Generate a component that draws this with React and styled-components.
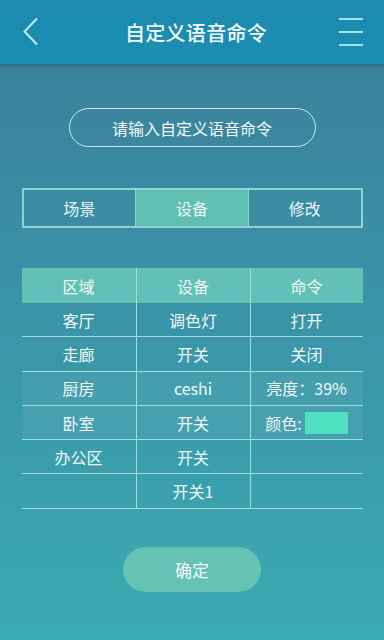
import styled, { createGlobalStyle } from 'styled-components';

const GlobalStyle = createGlobalStyle`
    html, body {
        margin: 0;
        padding: 0;
    }
    body {
        font-family: "Noto Sans CJK SC", "Noto Sans", sans-serif;
        background: #3a93a6;
    }
    * {
        box-sizing: border-box;
    }
`;

const Screen = styled.div`
    width: 384px;
    height: 640px;
    display: flex;
    flex-direction: column;
    background: linear-gradient(180deg, #3b7d99 0%, #3a92a6 45%, #3aaab2 100%);
    color: #eef8f7;
    overflow: hidden;
`;

const Header = styled.div`
    height: 64px;
    flex-shrink: 0;
    display: flex;
    align-items: center;
    justify-content: space-between;
    background: linear-gradient(180deg, #1b8aae 0%, #1a8fb1 100%);
    box-shadow: 0 2px 4px rgba(0, 0, 0, 0.22);
    position: relative;
    z-index: 1;
`;

const HeaderSlot = styled.div`
    width: ${(props) => (props.$right ? '56px' : '64px')};
    height: 64px;
    display: flex;
    align-items: center;
    justify-content: ${(props) => (props.$right ? 'flex-end' : 'flex-start')};
    padding: ${(props) => (props.$right ? '0 21px 0 0' : '0 0 0 22px')};
`;

const Title = styled.h1`
    margin: 0;
    font-size: 20px;
    font-weight: 500;
    color: #f4fbfc;
    letter-spacing: 0.3px;
`;

const MenuLines = styled.div`
    display: flex;
    flex-direction: column;
    gap: 11px;
`;

const MenuLine = styled.span`
    display: block;
    width: 24px;
    height: 2px;
    background: #a9e2ef;
`;

const Body = styled.div`
    flex: 1;
    display: flex;
    flex-direction: column;
    align-items: center;
    padding-top: 44px;
`;

const InputPill = styled.div`
    width: 247px;
    height: 39px;
    border: 1.5px solid #cbe7ed;
    border-radius: 20px;
    display: flex;
    align-items: center;
    justify-content: center;
    font-size: 16px;
    color: #f2fafa;
`;

const Tabs = styled.div`
    width: 341px;
    height: 40px;
    margin-top: 41px;
    display: flex;
    border: 2px solid #8fd2d6;
`;

const Tab = styled.div`
    flex: 1;
    display: flex;
    align-items: center;
    justify-content: center;
    font-size: 16px;
    border-left: ${(props) => (props.$first ? 'none' : '1.5px solid #8fd2d6')};
    background: ${(props) => (props.$active ? '#62bfb4' : 'transparent')};
`;

const Table = styled.div`
    width: 341px;
    margin-top: 40px;
    display: grid;
    grid-template-columns: 114px 114px 113px;
    grid-template-rows: 35px repeat(6, 34.3px);
`;

const Cell = styled.div`
    display: flex;
    align-items: center;
    justify-content: center;
    gap: 3px;
    font-size: 16px;
    color: #f0f9f8;
    border-left: ${(props) => (props.$col === 0 ? 'none' : '1px solid #a6dbdc')};
    border-bottom: ${(props) => (props.$head ? 'none' : '1px solid #a6dbdc')};
    background: ${(props) =>
        props.$head ? '#63c0b6' : props.$hl ? 'rgba(255, 255, 255, 0.06)' : 'transparent'};
`;

const Swatch = styled.span`
    display: inline-block;
    width: 43px;
    height: 22px;
    background: ${(props) => props.color};
`;

const ConfirmButton = styled.button`
    margin-top: 38px;
    width: 138px;
    height: 45px;
    border: none;
    border-radius: 23px;
    background: #66c2b5;
    color: #f4fbfa;
    font-family: inherit;
    font-size: 17px;
`;

const rows = [
    ['区域', '设备', '命令'],
    ['客厅', '调色灯', '打开'],
    ['走廊', '开关', '关闭'],
    ['厨房', 'ceshi', '亮度：39%'],
    ['卧室', '开关', 'color'],
    ['办公区', '开关', ''],
    ['', '开关1', ''],
];

const App = () => {
    return (
        <Screen>
            <GlobalStyle />
            <Header>
                <HeaderSlot>
                    <svg width="18" height="30" viewBox="0 0 18 30">
                        <path d="M15 1.5 L2.5 14.5 L15 27.5" fill="none" stroke="#c4eaf3" strokeWidth="2" />
                    </svg>
                </HeaderSlot>
                <Title>自定义语音命令</Title>
                <HeaderSlot $right>
                    <MenuLines>
                        <MenuLine />
                        <MenuLine />
                        <MenuLine />
                    </MenuLines>
                </HeaderSlot>
            </Header>
            <Body>
                <InputPill>请输入自定义语音命令</InputPill>
                <Tabs>
                    <Tab $first>场景</Tab>
                    <Tab $active>设备</Tab>
                    <Tab>修改</Tab>
                </Tabs>
                <Table>
                    {rows.map((row, r) =>
                        row.map((text, c) => (
                            <Cell key={r + '-' + c} $col={c} $head={r === 0} $hl={r === 3 || r === 4}>
                                {text === 'color' ? (
                                    <>
                                        颜色:
                                        <Swatch color="#4fe0c1" />
                                    </>
                                ) : (
                                    text
                                )}
                            </Cell>
                        ))
                    )}
                </Table>
                <ConfirmButton>确定</ConfirmButton>
            </Body>
        </Screen>
    );
};

export default App;
